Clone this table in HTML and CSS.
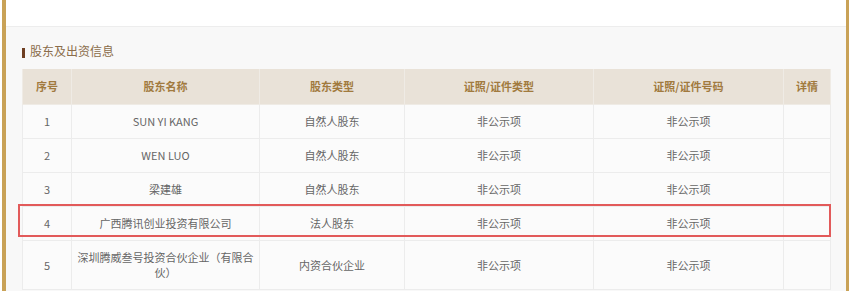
FILE: index.html
```html
<!DOCTYPE html>
<html lang="zh-CN">
<head>
<meta charset="utf-8">
<link rel="stylesheet" href="styles.css">
</head>
<body>
<div class="frame">
  <div class="top-panel"></div>
  <div class="section">
    <h2 class="section-title"><span class="title-bar"></span>股东及出资信息</h2>
    <div class="table-wrap">
      <table class="holders">
        <colgroup>
          <col class="c1"><col class="c2"><col class="c3"><col class="c4"><col class="c5"><col class="c6">
        </colgroup>
        <thead>
          <tr><th>序号</th><th>股东名称</th><th>股东类型</th><th>证照/证件类型</th><th>证照/证件号码</th><th>详情</th></tr>
        </thead>
        <tbody>
          <tr><td>1</td><td>SUN YI KANG</td><td>自然人股东</td><td>非公示项</td><td>非公示项</td><td></td></tr>
          <tr><td>2</td><td>WEN LUO</td><td>自然人股东</td><td>非公示项</td><td>非公示项</td><td></td></tr>
          <tr><td>3</td><td>梁建雄</td><td>自然人股东</td><td>非公示项</td><td>非公示项</td><td></td></tr>
          <tr><td>4</td><td>广西腾讯创业投资有限公司</td><td>法人股东</td><td>非公示项</td><td>非公示项</td><td></td></tr>
          <tr><td>5</td><td>深圳腾威叁号投资合伙企业（有限合伙）</td><td>内资合伙企业</td><td>非公示项</td><td>非公示项</td><td></td></tr>
        </tbody>
      </table>
      <div class="highlight"></div>
    </div>
  </div>
</div>
</body>
</html>
```

FILE: styles.css
```css
html, body {
  margin: 0;
  padding: 0;
  background: #ffffff;
}
body {
  font-family: "Noto Sans CJK SC", "Noto Sans", sans-serif;
}
.frame {
  margin-left: 2px;
  width: 840px;
  height: 291px;
  border-left: 4px solid #c9a257;
  border-right: 3px solid #c9a257;
  background: #f8f8f8;
  overflow: hidden;
}
.top-panel {
  height: 26px;
  background: #ffffff;
  border-bottom: 1px solid #ededed;
}
.section {
  padding: 16px 0 0 16px;
}
.section-title {
  display: flex;
  align-items: center;
  margin: 0;
  height: 16px;
  font-size: 12px;
  font-weight: normal;
  color: #8a6c4a;
  line-height: 16px;
}
.title-bar {
  width: 3px;
  height: 10px;
  background: #6e3f22;
  margin-right: 5px;
  margin-top: 3px;
}
.table-wrap {
  position: relative;
  margin-top: 10px;
  width: 808px;
}
.holders {
  width: 808px;
  border-collapse: collapse;
  table-layout: fixed;
  font-size: 11px;
  line-height: 15px;
  color: #666666;
  background: #fbfbfb;
}
.c1 { width: 49px; }
.c2 { width: 188px; }
.c3 { width: 145px; }
.c4 { width: 189px; }
.c5 { width: 190px; }
.c6 { width: 47px; }
.holders th {
  background: #e9e2d8;
  color: #a17a3e;
  font-weight: bold;
  padding: 10px 5px;
  border: 1px solid #efebe5;
  border-top: none;
  text-align: center;
}
.holders td {
  padding: 9px 5px;
  border: 1px solid #ececec;
  text-align: center;
}
.highlight {
  position: absolute;
  left: -4px;
  top: 135px;
  width: 809px;
  height: 29px;
  border: 2px solid #e25a5a;
  pointer-events: none;
}
```
